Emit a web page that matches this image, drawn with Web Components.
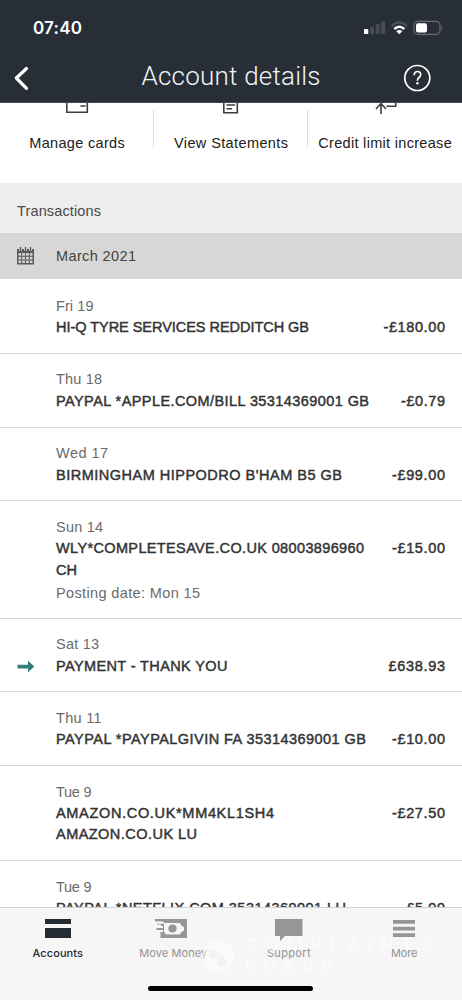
<!DOCTYPE html>
<html lang="en"><head><meta charset="utf-8"><title>Account details</title>
<style>html,body{margin:0;height:100%;overflow:hidden;background:#fff}body{font-family:"Liberation Sans",Arial,sans-serif;font-size:14.500px;color:#333}</style></head>
<body><account-screen></account-screen>
<script>
const define=(name,html,init)=>customElements.define(name,class extends HTMLElement{
 connectedCallback(){if(this.shadowRoot)return;const t=document.createElement('template');t.innerHTML=html;this.attachShadow({mode:'open'}).append(t.content.cloneNode(true));if(init)init.call(this,this.shadowRoot);}
});
/* One line of text, tracked out to the width in its w attribute. */
define('fit-text','<style>:host{display:block;white-space:nowrap}span{display:inline-block}</style><span></span>',function(r){
 const s=r.querySelector('span');s.textContent=this.getAttribute('text');
 const w=+this.getAttribute('w'),n=s.textContent.length;
 if(w){const ls=(w-s.getBoundingClientRect().width)/(n-1);s.style.letterSpacing=ls+'px';s.style.marginRight=-ls+'px';}
});
define('status-bar',`<style>:host{display:flex;height:54px;box-sizing:border-box;padding:0 19px 0 33px;justify-content:space-between;align-items:center;color:#fff}
fit-text{font:600 17px Inter,sans-serif;padding-top:2px}svg{display:block;margin-top:1px}</style>
<fit-text text="07:40" w="49"></fit-text>
<svg width="80" height="16" viewBox="363 20 80 16"><rect x="364" y="29" width="4.3" height="5" rx="1" fill="#fff"/><g fill="#484e55"><rect x="370" y="27" width="4" height="7" rx="1"/><rect x="375.700" y="24" width="4" height="10" rx="1"/><rect x="381" y="21.500" width="4" height="12.500" rx="1"/></g>
<g fill="none" stroke-width="2.400"><path d="M391.500 26.200Q399.300 19 407 26.200" stroke="#484e55"/><path d="M394.300 29Q399.300 24.500 404.300 29" stroke="#fff"/></g><path d="M396.300 31.300Q399.300 28.800 402.300 31.300L399.300 34.200z" fill="#fff"/>
<rect x="414" y="21.300" width="26" height="13" rx="4" fill="none" stroke="#686d73" stroke-width="1.200"/><rect x="416" y="23.200" width="11" height="9.300" rx="2" fill="#fff"/><path d="M441.500 25.500q2 2.300 0 4.600z" fill="#686d73"/></svg>`);
define('title-bar',`<style>:host{display:grid;grid-template-columns:46px 1fr 46px;height:48px;align-items:center;color:#fff}fit-text{justify-self:center;font-family:Roboto,sans-serif;font-weight:300;font-size:26px;line-height:30px;color:#f1f5f9;padding-bottom:4px}svg{display:block}</style>
<svg width="46" height="48" viewBox="0 54 46 48"><path d="M26.500 68.500L16.300 78 26.500 88.300" fill="none" stroke="#fff" stroke-width="3.200" stroke-linecap="round" stroke-linejoin="round"/></svg>
<fit-text text="Account details" w="179"></fit-text>
<svg width="46" height="48" viewBox="416 54 46 48" overflow="visible"><circle cx="417.300" cy="78" r="12.500" fill="none" stroke="#fff" stroke-width="1.700"/><path d="M414.200 75.200q.1-3.700 3.300-3.700 3.200 0 3.200 3 0 1.700-1.700 3-1.600 1.200-1.600 3.200" fill="none" stroke="#fff" stroke-width="1.700"/><circle cx="417.400" cy="83.300" r="1.200" fill="#fff"/></svg>`);
define('quick-action',`<style>:host{display:flex;flex-direction:column;align-items:center;height:80px;position:relative}::slotted(svg){display:block;height:15px}fit-text{line-height:20px;margin-top:14.500px;color:#202020}
:host([divided])::after{content:"";position:absolute;right:0;top:7px;height:37px;width:1px;background:#dcdcdc}</style><slot></slot><fit-text></fit-text>`,function(r){const o=r.querySelector('fit-text'),f=document.createElement('fit-text');f.setAttribute('text',this.getAttribute('label'));f.setAttribute('w',this.getAttribute('w'));o.replaceWith(f);});
define('quick-actions',`<style>:host{display:grid;grid-template-columns:154px 154px 154px;height:80px;overflow:hidden;background:#fff}svg{fill:none;stroke:#3b3d40;stroke-width:1.600}</style>
<quick-action divided label="Manage cards" w="95.500"><svg width="24" height="15" viewBox="65 103 24 15"><path d="M66.800 98V112.300H87.300V98M80.500 106h5"/></svg></quick-action>
<quick-action divided label="View Statements" w="114"><svg width="20" height="15" viewBox="221 103 20 15"><path d="M223.800 98V112.700H237.300V98M226.500 105H235M226.500 108.700h5.500"/></svg></quick-action>
<quick-action label="Credit limit increase" w="133.500"><svg width="24" height="15" viewBox="373.500 103 24 15"><path d="M381.500 114V104M376.500 109L381.500 103.500 386.500 109M387 106.200H396.200V98"/></svg></quick-action>`);
define('section-title','<style>:host{display:flex;align-items:center;height:50px;padding:5px 0 0 17px;box-sizing:border-box;background:#eee;color:#484848}</style><fit-text text="Transactions" w="84"></fit-text>');
define('month-header',`<style>:host{display:flex;align-items:center;height:46px;background:#d7d7d5;color:#434343}svg{margin:0 22px 0 17px}</style>
<svg width="17" height="18" viewBox="0 0 17 18"><path d="M0 2H17V17.500H0z" fill="#5b5b59"/><path d="M3.500 0V4M8.500 0V4M13.500 0V4" stroke="#d7d7d5" stroke-width="3"/><path d="M3.500 0V4M8.500 0V4M13.500 0V4" stroke="#5b5b59" stroke-width="1.400"/><path d="M1.500 6h2.700v2.700H1.500zM5.200 6h2.800v2.700H5.200zM9 6h2.800v2.700H9zM12.800 6h2.700v2.700h-2.700zM1.500 9.700h2.700v2.700H1.500zM5.200 9.700h2.800v2.700H5.200zM9 9.700h2.800v2.700H9zM12.800 9.700h2.700v2.700h-2.700zM1.500 13.400h2.700v2.700H1.500zM5.200 13.400h2.800v2.700H5.200zM9 13.400h2.800v2.700H9zM12.800 13.400h2.700v2.700h-2.700z" fill="#d0d0ce"/></svg><fit-text text="March 2021" w="80"></fit-text>`);
define('transaction-row','',function(r){const a=n=>this.getAttribute(n);
 const lines=a('lines').split('|').map(x=>{const [t,w]=x.split('@');return `<fit-text text="${t}" w="${w}"></fit-text>`}).join('');
 const [d,dw]=a('date').split('@'),[m,mw]=a('amount').split('@'),[p,pw]=(a('posting')||'').split('@');
 r.innerHTML=`<style>:host{display:grid;grid-template-columns:56px 1fr auto;padding:15.500px 17px 14.400px 0;border-bottom:1px solid #d9d9d9;background:#fff}
 .copy{grid-column:2;grid-row:1/3}.date,.posting{color:#6b6b6b;line-height:21.500px}.posting{line-height:22.400px;padding-top:1px;margin-bottom:-1px}.name,.amount{-webkit-text-stroke:.45px #333;color:#333;line-height:21.300px}.amount{grid-column:3;margin-top:21.500px}.icon{grid-column:1;grid-row:1;margin:26px 0 0 17px}svg{display:block}</style>
 ${this.hasAttribute('incoming')?'<div class="icon"><svg width="18" height="13" viewBox="0 0 18 13"><path d="M.5 4.700H11V.8L17.300 6.500 11 12.300V8.400H.5z" fill="#347f75"/></svg></div>':''}
 <div class="copy"><fit-text class="date" text="${d}" w="${dw}"></fit-text><div class="name">${lines}</div>${p?`<fit-text class="posting" text="${p}" w="${pw}"></fit-text>`:''}</div><fit-text class="amount" text="${m}" w="${mw}"></fit-text>`;});
define('transaction-list',`<style>:host{display:block;height:628px;box-sizing:border-box;padding-top:1.300px;overflow:hidden;background:#fff}</style>
<transaction-row date="Fri 19@37.500" lines="HI-Q TYRE SERVICES REDDITCH GB@253" amount="-£180.00@61.500"></transaction-row>
<transaction-row date="Thu 18@46" lines="PAYPAL *APPLE.COM/BILL 35314369001 GB@313" amount="-£0.79@44"></transaction-row>
<transaction-row date="Wed 17@52" lines="BIRMINGHAM HIPPODRO B'HAM B5 GB@286" amount="-£99.00@53"></transaction-row>
<transaction-row date="Sun 14@47" lines="WLY*COMPLETESAVE.CO.UK 08003896960@308|CH@21" posting="Posting date: Mon 15@144" amount="-£15.00@53"></transaction-row>
<transaction-row incoming date="Sat 13@43" lines="PAYMENT - THANK YOU@171.500" amount="£638.93@56.500"></transaction-row>
<transaction-row date="Thu 11@45.500" lines="PAYPAL *PAYPALGIVIN FA 35314369001 GB@310" amount="-£10.00@53"></transaction-row>
<transaction-row date="Tue 9@35.500" lines="AMAZON.CO.UK*MM4KL1SH4@218|AMAZON.CO.UK LU@141" amount="-£27.50@53"></transaction-row>
<transaction-row date="Tue 9@35.500" lines="PAYPAL *NETFLIX.COM 35314369001 LU@290" amount="-£5.99@44"></transaction-row>`);
define('nav-item','',function(r){const a=n=>this.getAttribute(n);r.innerHTML=`<style>:host{display:flex;flex-direction:column;align-items:center;color:#929292}:host([active]){color:#252b33}::slotted(svg){display:block;margin-top:10px}fit-text{font:400 11px/14px Inter,sans-serif;margin-top:4px}:host([active]) fit-text{font-weight:500}</style><slot></slot><fit-text text="${a('label')}" w="${a('w')}"></fit-text>`});
define('complaints-mark',`<style>:host{position:absolute;left:201px;top:27px;display:flex;gap:10px;color:#fff;pointer-events:none;opacity:.5}div{font:600 17px/21px Inter,sans-serif}</style>
<svg width="34" height="44" viewBox="0 0 36 44"><circle cx="18" cy="22" r="17" fill="#fff"/><path d="M9 14H17V22H26V31H17V23H9z" fill="#f0f0f0"/></svg><div><fit-text text="COMPLAINTS" w="187"></fit-text><fit-text text="BOARD" w="88"></fit-text></div>`);
define('tab-bar',`<style>:host{display:block;position:relative;height:93px;box-sizing:border-box;background:#f6f6f6;border-top:1px solid #d1d1d1}nav{display:grid;grid-template-columns:115.500px 115.500px 115.500px 115.500px}.home{position:absolute;left:148px;bottom:9px;width:165px;height:5.500px;border-radius:3px;background:#000}</style>
<nav><nav-item active label="Accounts" w="50.500"><svg width="26" height="24"><path d="M0 1h26v5H0zM0 10h26v10H0z" fill="#252b33"/></svg></nav-item>
<nav-item label="Move Money" w="68"><svg width="32" height="24" style="margin-right:4px"><path d="M0 1h32v19H5.500V14H8V12H1.500V10H8V8.500H6V6.500H2V4.500H7V3.500H0z" fill="#969696"/><path d="M0 3.700H9V5.700H0zM2 8H8V10H2zM9 5H25Q26 8 29 9V12.500Q26 13.500 25 16.500H11Q10 15 9 14z" fill="#f6f6f6"/><circle cx="17.500" cy="10.500" r="4.100" fill="#969696"/></svg></nav-item>
<nav-item label="Support" w="43.500"><svg width="28" height="24"><path d="M0 1H27.500V18H10L5 23V18H0z" fill="#969696"/></svg></nav-item>
<nav-item label="More" w="26.500"><svg width="22" height="24"><path d="M0 2h22v3.700H0zM0 8.700h22v3.700H0zM0 15.200h22v3.700H0z" fill="#969696"/></svg></nav-item></nav><complaints-mark></complaints-mark><div class="home"></div>`);
define('account-screen',`<style>:host{display:block;width:462px;height:1000px;overflow:hidden}header{background:#282e36;border-bottom:1px solid #454a50;height:103px;box-sizing:border-box;overflow:hidden}</style><header><status-bar></status-bar><title-bar></title-bar></header><quick-actions></quick-actions><section-title></section-title><month-header></month-header><transaction-list></transaction-list><tab-bar></tab-bar>`);
</script></body></html>
